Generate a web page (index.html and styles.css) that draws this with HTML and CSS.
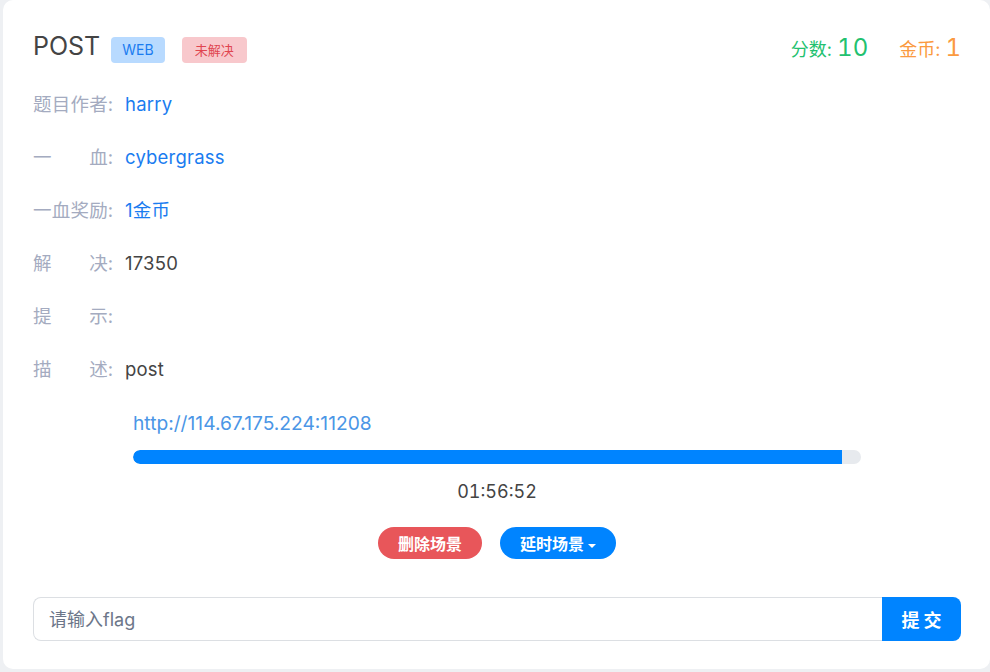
FILE: index.html
```html
<!DOCTYPE html>
<html lang="zh-CN">
<head>
  <meta charset="UTF-8">
  <meta name="viewport" content="width=device-width, initial-scale=1.0">
  <title>POST</title>
  <link rel="stylesheet" href="styles.css">
</head>
<body>
  <div class="card">
    <div class="head">
      <div class="title">
        <h2>POST</h2>
        <span class="badge badge-web">WEB</span>
        <span class="badge badge-todo">未解决</span>
      </div>
      <div class="score">
        <span class="points">分数: <b>10</b></span>
        <span class="coins">金币: <b>1</b></span>
      </div>
    </div>

    <div class="row"><span class="label"><span class="name">题目作者</span>:</span><span class="value link">harry</span></div>
    <div class="row"><span class="label"><span class="name">一血</span>:</span><span class="value link">cybergrass</span></div>
    <div class="row"><span class="label"><span class="name">一血奖励</span>:</span><span class="value link">1金币</span></div>
    <div class="row"><span class="label"><span class="name">解决</span>:</span><span class="value">17350</span></div>
    <div class="row"><span class="label"><span class="name">提示</span>:</span><span class="value"></span></div>
    <div class="row"><span class="label"><span class="name">描述</span>:</span><span class="value">post</span></div>

    <div class="scene">
      <a class="url" href="#">http://114.67.175.224:11208</a>
      <div class="progress"><div class="bar" style="width: 97.4%"></div></div>
      <div class="timer">01:56:52</div>
    </div>

    <div class="actions">
      <button class="btn btn-red">删除场景</button>
      <button class="btn btn-blue">延时场景<span class="caret"></span></button>
    </div>

    <form class="flag" onsubmit="return false">
      <input type="text" placeholder="请输入flag">
      <button type="submit">提交</button>
    </form>
  </div>
</body>
</html>
```

FILE: styles.css
```css
body {
  margin: 0;
  background-color: #eef0f3;
  font-family: "Inter", "Noto Sans CJK SC", sans-serif;
  color: #444;
  overflow: hidden;
}

.card {
  margin-left: 3px;
  width: 928px;
  height: 611px;
  padding: 30px 29px 28px 30px;
  background-color: #fff;
  border-radius: 10px;
}

.head {
  display: flex;
  justify-content: space-between;
  align-items: center;
  height: 32px;
}

.title {
  display: flex;
  align-items: center;
}

.title h2 {
  margin: 0 11px 0 0;
  font-size: 25px;
  font-weight: 400;
  color: #444;
}

.badge {
  display: inline-block;
  height: 26px;
  line-height: 26px;
  padding: 0 11px;
  margin-top: 8px;
  font-size: 14px;
  border-radius: 4px;
}

.badge-web {
  background-color: #b8daff;
  color: #1a7cf0;
  margin-right: 17px;
}

.badge-todo {
  background-color: #f8c8cc;
  color: #e0454f;
  padding: 0 13px;
  font-size: 13px;
}

.score {
  display: flex;
  gap: 31px;
  font-size: 18px;
  margin-top: 2px;
}

.score b {
  font-weight: 400;
  font-size: 24px;
  font-variant-numeric: tabular-nums;
}

.points {
  color: #22c16f;
}

.coins {
  color: #fb9a40;
}

.row {
  display: flex;
  line-height: 27px;
  font-size: 18.5px;
  margin-top: 26px;
}

.head + .row {
  margin-top: 29px;
}

.label {
  display: flex;
  width: 80px;
  margin-right: 12px;
  color: #a4abc0;
}

.name {
  width: 75px;
  text-align: justify;
  text-align-last: justify;
}

.value {
  color: #444;
  letter-spacing: 0.2px;
}

.link {
  color: #1a7cf0;
}

.scene {
  margin: 27px 100px 0;
}

.url {
  display: block;
  line-height: 26px;
  font-size: 19.2px;
  color: #4b96e6;
  text-decoration: none;
}

.progress {
  height: 14px;
  margin-top: 14px;
  background-color: #e7eaee;
  border-radius: 7px;
  overflow: hidden;
}

.bar {
  height: 100%;
  background-color: #0084ff;
  border-radius: 7px 0 0 7px;
}

.timer {
  margin-top: 16px;
  line-height: 24px;
  font-size: 18px;
  font-variant-numeric: tabular-nums;
  text-align: center;
  color: #444;
}

.actions {
  display: flex;
  justify-content: center;
  gap: 18px;
  margin-top: 23px;
}

.btn {
  height: 32px;
  padding: 0 20px;
  border: none;
  border-radius: 16px;
  color: #fff;
  font-family: inherit;
  font-size: 16px;
  font-weight: 700;
  cursor: pointer;
}

.btn-red {
  background-color: #e8565a;
}

.btn-blue {
  background-color: #0084ff;
}

.caret {
  display: inline-block;
  margin-left: 4px;
  vertical-align: middle;
  border-top: 4px solid #fff;
  border-left: 4px solid transparent;
  border-right: 4px solid transparent;
}

.flag {
  display: flex;
  margin-top: 38px;
  height: 44px;
}

.flag input {
  flex: 1;
  padding: 0 15px;
  border: 1px solid #dcdfe3;
  border-right: none;
  border-radius: 8px 0 0 8px;
  font-family: inherit;
  font-size: 18px;
  color: #444;
  outline: none;
}

.flag input::placeholder {
  color: #6c7689;
}

.flag button {
  width: 79px;
  border: none;
  border-radius: 0 8px 8px 0;
  background-color: #0084ff;
  color: #fff;
  font-family: inherit;
  font-size: 18px;
  font-weight: 700;
  letter-spacing: 4px;
  text-indent: 4px;
  cursor: pointer;
}
```
